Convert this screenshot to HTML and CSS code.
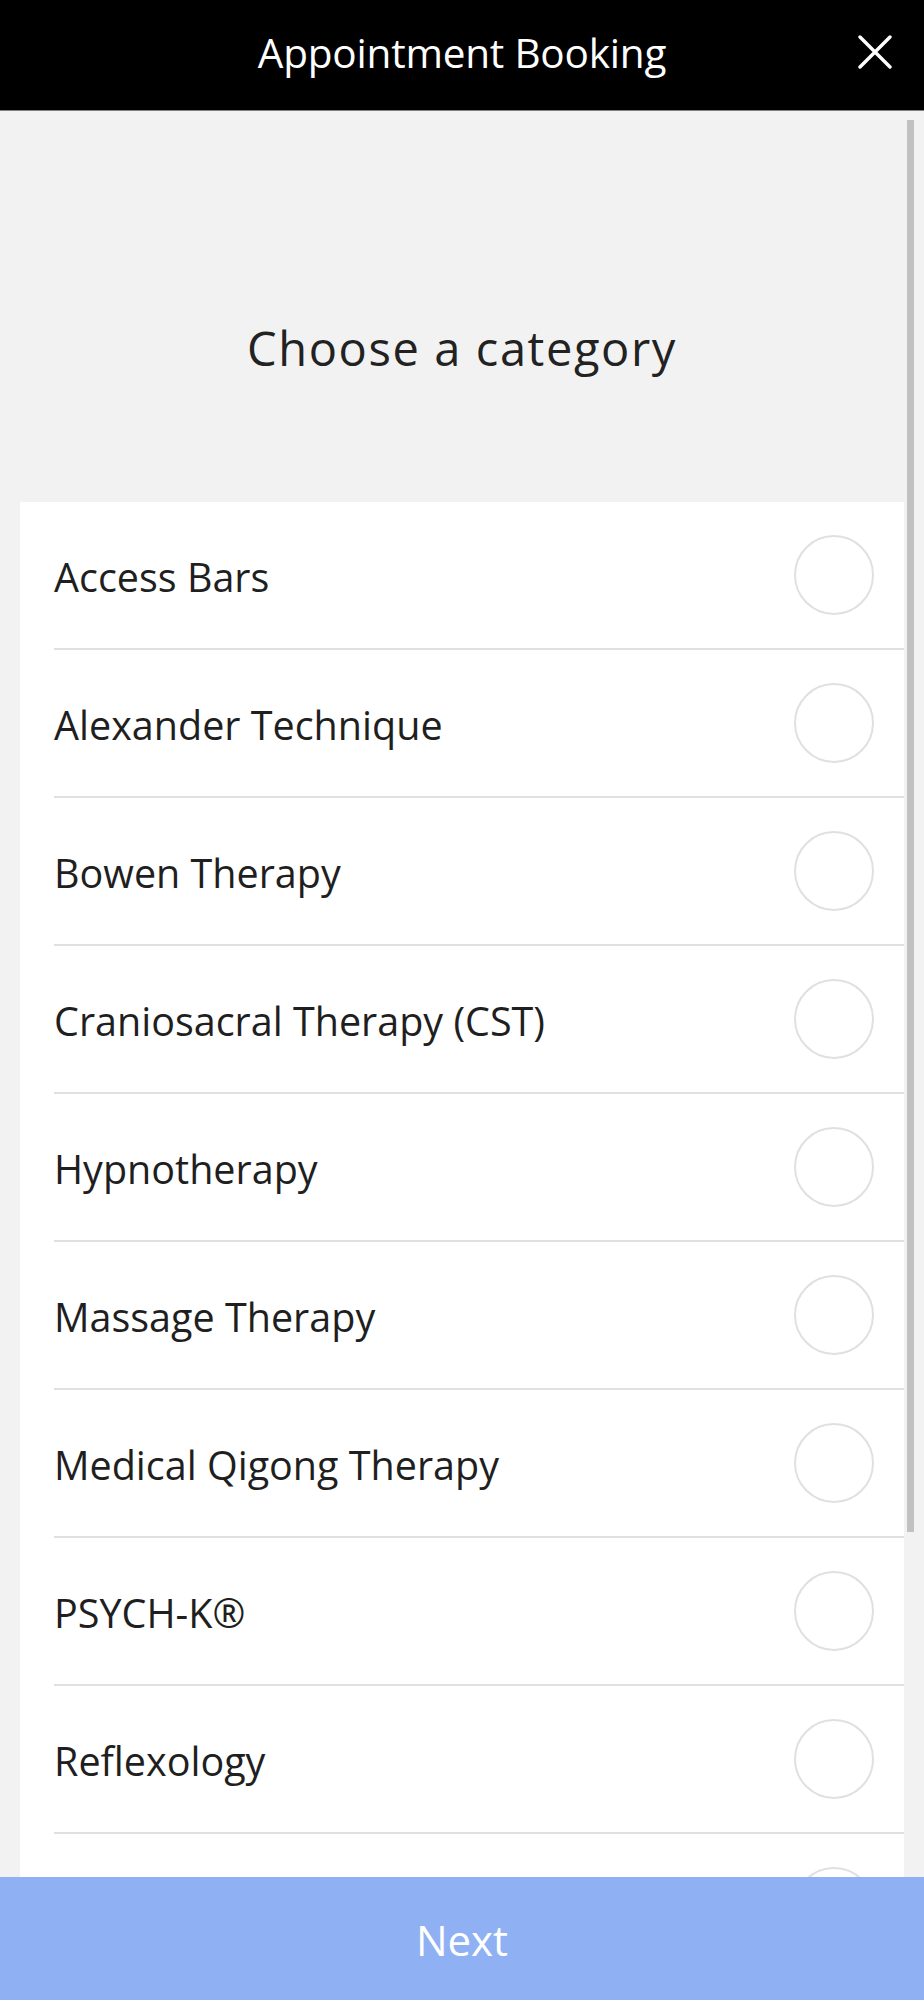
FILE: index.html
```html
<!DOCTYPE html>
<html lang="en">
<head>
<meta charset="utf-8">
<title>Appointment Booking</title>
<link rel="stylesheet" href="styles.css">
</head>
<body>
<header class="topbar">
  <span></span>
  <h1 class="topbar-title">Appointment Booking</h1>
  <button class="close-btn" aria-label="Close">
    <svg width="34" height="34" viewBox="0 0 34 34"><path d="M2 2 L32 32 M32 2 L2 32" stroke="#fff" stroke-width="3.4" stroke-linecap="round" fill="none"/></svg>
  </button>
</header>
<main class="content">
  <h2 class="heading">Choose a category</h2>
  <ul class="options">
    <li class="option"><span class="option-label">Access Bars</span><span class="radio"></span></li>
    <li class="option"><span class="option-label">Alexander Technique</span><span class="radio"></span></li>
    <li class="option"><span class="option-label">Bowen Therapy</span><span class="radio"></span></li>
    <li class="option"><span class="option-label">Craniosacral Therapy (CST)</span><span class="radio"></span></li>
    <li class="option"><span class="option-label">Hypnotherapy</span><span class="radio"></span></li>
    <li class="option"><span class="option-label">Massage Therapy</span><span class="radio"></span></li>
    <li class="option"><span class="option-label">Medical Qigong Therapy</span><span class="radio"></span></li>
    <li class="option"><span class="option-label">PSYCH-K®</span><span class="radio"></span></li>
    <li class="option"><span class="option-label">Reflexology</span><span class="radio"></span></li>
    <li class="option"><span class="option-label">Reiki</span><span class="radio"></span></li>
  </ul>
</main>
<div class="scroll-thumb"></div>
<button class="next-btn">Next</button>
</body>
</html>
```
FILE: styles.css
```css
* { box-sizing: border-box; }
html, body { margin: 0; padding: 0; }
body {
  background: #f2f2f2;
  font-family: "Open Sans", "Noto Sans", sans-serif;
  color: #222;
  overflow: hidden;
  height: 2000px;
}
.topbar {
  height: 111px;
  background: #000;
  border-bottom: 1px solid #808080;
  display: grid;
  grid-template-columns: 1fr auto 1fr;
  align-items: center;
}
.topbar-title {
  margin: 0;
  color: #fff;
  font-family: "Open Sans", sans-serif;
  font-weight: 400;
  font-size: 40.5px;
  line-height: 1;
  letter-spacing: -0.2px;
  padding-bottom: 3px;
}
.close-btn {
  justify-self: end;
  background: none;
  border: 0;
  padding: 0;
  margin-right: 32px;
  margin-bottom: 6px;
  width: 34px;
  height: 34px;
  display: flex;
}
.content {
  padding: 0 20px;
}
.heading {
  margin: 0;
  padding: 201px 0 118px;
  text-align: center;
  font-weight: 400;
  font-size: 47px;
  line-height: 72px;
  letter-spacing: 1.6px;
  color: #222;
}
.options {
  list-style: none;
  margin: 0;
  padding: 0;
  background: #fff;
}
.option {
  margin-left: 34px;
  height: 148px;
  border-bottom: 2px solid #e0e0e0;
  display: flex;
  align-items: center;
  justify-content: space-between;
  padding-right: 30px;
}
.option-label {
  font-size: 39.5px;
  line-height: 1.2;
  color: #1f1f1f;
  padding-top: 6px;
}
.radio {
  width: 80px;
  height: 80px;
  border-radius: 50%;
  border: 2.5px solid #e0e0e0;
  flex: none;
}
.scroll-thumb {
  position: absolute;
  left: 907px;
  top: 120px;
  width: 7px;
  height: 1412px;
  background: #c1c1c1;
}
.next-btn {
  position: fixed;
  left: 0;
  right: 0;
  bottom: 0;
  height: 123px;
  border: 0;
  background: #8fb1f3;
  color: #fff;
  font-family: "Open Sans", sans-serif;
  font-size: 42px;
  padding: 2px 0 0;
}
```
